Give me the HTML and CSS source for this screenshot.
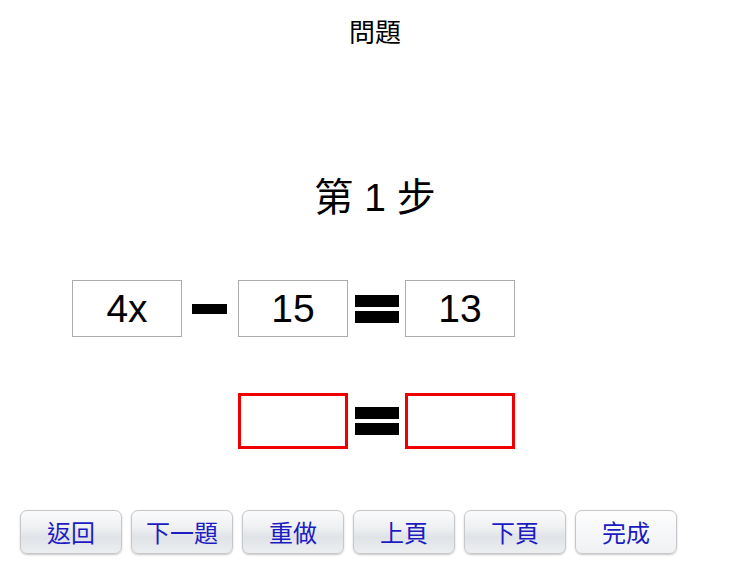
FILE: index.html
```html
<!DOCTYPE html>
<html lang="zh-Hant">
<head>
<meta charset="utf-8">
<title>問題</title>
<link rel="stylesheet" href="styles.css">
</head>
<body>
<div class="page">
  <div class="title">問題</div>
  <div class="step">第 1 步</div>
  <div class="eq">
    <div class="box">4x</div>
    <div class="op"><span class="minus"></span></div>
    <div class="box">15</div>
    <div class="op"><span class="equals"></span></div>
    <div class="box">13</div>
    <div class="box answer col3"></div>
    <div class="op"><span class="equals"></span></div>
    <div class="box answer"></div>
  </div>
  <div class="buttons">
    <button class="btn">返回</button>
    <button class="btn">下一題</button>
    <button class="btn">重做</button>
    <button class="btn">上頁</button>
    <button class="btn">下頁</button>
    <button class="btn light">完成</button>
  </div>
</div>
</body>
</html>
```

FILE: styles.css
```css
html, body {
  margin: 0;
  padding: 0;
  background: #fff;
}
.page {
  width: 750px;
  height: 563px;
  overflow: hidden;
  font-family: "Liberation Sans", "Noto Sans CJK TC", sans-serif;
  color: #000;
}
.title {
  padding-top: 15px;
  height: 32px;
  line-height: 32px;
  font-size: 26px;
  text-align: center;
  font-family: "Noto Sans CJK TC", sans-serif;
}
.step {
  margin-top: 129px;
  height: 44px;
  line-height: 44px;
  font-size: 39px;
  text-align: center;
  font-family: "Liberation Sans", "Noto Sans CJK TC", sans-serif;
}
.eq {
  margin-top: 60px;
  margin-left: 72px;
  display: grid;
  grid-template-columns: 110px 56px 110px 57px 110px;
  grid-template-rows: 57px 56px;
  row-gap: 56px;
}
.box {
  box-sizing: border-box;
  border: 1px solid #ababab;
  display: flex;
  align-items: center;
  justify-content: center;
  font-size: 39px;
  font-family: "Liberation Sans", sans-serif;
}
.box.answer {
  border: 3px solid #ee0000;
}
.col3 {
  grid-column: 3;
}
.op {
  display: flex;
  align-items: center;
  justify-content: center;
}
.minus {
  display: block;
  width: 35px;
  height: 10px;
  background: #000;
  margin-right: 2px;
}
.equals {
  display: block;
  width: 44px;
  height: 12px;
  border-bottom: 12px solid #000;
  box-shadow: inset 0 12px 0 #000;
  background: #fff;
  padding-bottom: 4px;
  box-sizing: content-box;
  margin-left: 1px;
}
.buttons {
  margin-top: 61px;
  margin-left: 20px;
  display: flex;
  gap: 9px;
}
.btn {
  box-sizing: border-box;
  width: 102px;
  height: 44px;
  padding: 0;
  border: 1px solid #c6c7ca;
  border-radius: 7px;
  background: linear-gradient(#fbfbfc 0%, #eef0f2 40%, #e0e3e7 62%, #eceef0 100%);
  box-shadow: 0 1px 2px rgba(0, 0, 0, 0.22);
  font-family: "Noto Sans CJK TC", sans-serif;
  font-size: 24px;
  line-height: 42px;
  color: #1c1cc2;
}
.btn.light {
  background: linear-gradient(#fdfdfe 0%, #f6f7f8 50%, #f0f1f3 100%);
}
```
